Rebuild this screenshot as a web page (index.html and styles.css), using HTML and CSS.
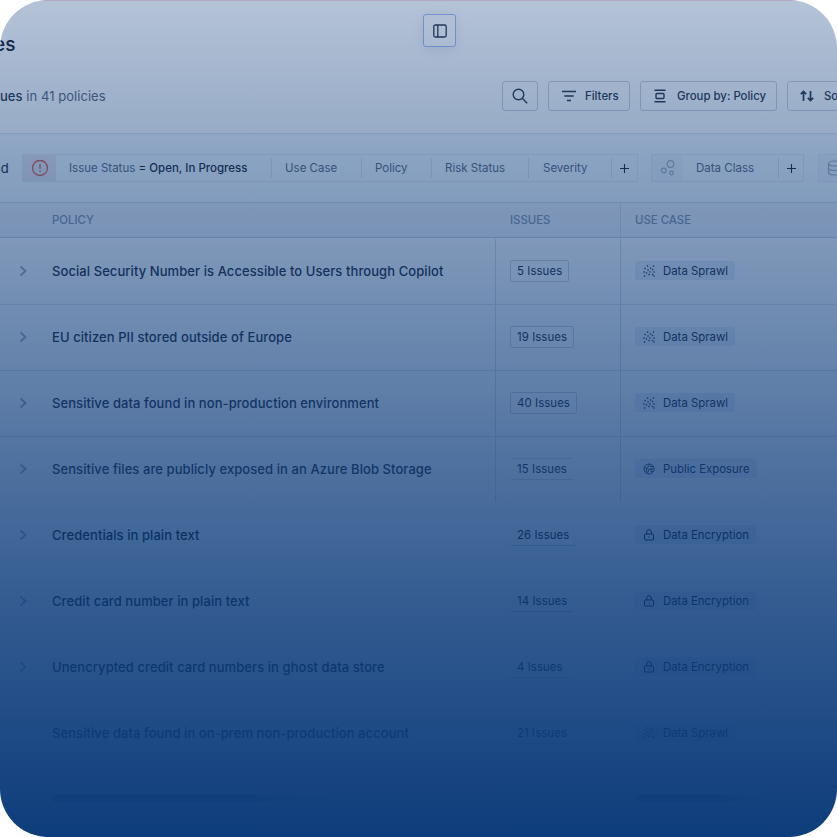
FILE: index.html
```
<!DOCTYPE html>
<html lang="en">
<head>
  <meta charset="UTF-8" />
  <meta name="viewport" content="width=device-width, initial-scale=1.0"/>
  <title>Policies</title>
  <link rel="stylesheet" href="styles.css">
</head>
<body>

<!-- Shared icons -->
<svg class="sprite" width="0" height="0">
  <symbol id="chevron" viewBox="0 0 10 12"><path d="M2.500 1.500 7.500 6l-5 4.500" fill="none" stroke="currentColor" stroke-width="1.800"/></symbol>
  <symbol id="sprawl" viewBox="0 0 12 12">
    <path d="M4.500 1h.1M10.500 1h.1M2 3.500h.1M7.500 3h.1M5 5h.1M9.500 4.500h.1M1 7h.1M7 7h.1M11 7h.1M3.500 8h.1M6 9.500h.1M9.500 9.500h.1M1.500 11h.1M11 11h.1" fill="none" stroke="currentColor" stroke-width="1.500" stroke-linecap="round"/>
  </symbol>
  <symbol id="exposure" viewBox="0 0 12 12">
    <g fill="none" stroke="currentColor" stroke-width=".9"><circle cx="6" cy="6" r="5"/><path d="M1.500 4.500 4 5.500 3 9M4 5.500 6.500 1.500M4.500 10l1.500-4h4M8 6v2.500l2 .5M7 3.500h3"/></g>
  </symbol>
  <symbol id="lock" viewBox="0 0 12 12">
    <g fill="none" stroke="currentColor"><rect x="1.500" y="5" width="9" height="6" rx="1"/><path d="M3.700 5V3a2.300 2.300 0 0 1 4.600 0v2M6 7.500v1.200"/></g>
  </symbol>
</svg>

<div class="panel">
  <button class="sidebar-toggle" type="button" aria-label="Toggle sidebar">
    <svg width="14" height="14" viewBox="0 0 14 14" fill="none" stroke="currentColor" stroke-width="1.300"><rect x=".8" y="1" width="12.400" height="12" rx="1.500"/><path d="M4.800 1v12"/></svg>
  </button>

  <header class="page-title">es</header>

  <div class="toolbar">
    <div class="summary"><b>ues</b> in 41 policies</div>
    <button class="tool-btn btn-search" type="button" aria-label="Search">
      <svg width="16" height="16" viewBox="0 0 16 16" fill="none" stroke="currentColor" stroke-width="1.400"><circle cx="6.500" cy="6.500" r="5.300"/><path d="m10.500 10.500 4.700 4.700"/></svg>
    </button>
    <button class="tool-btn btn-filters" type="button">
      <svg width="14" height="12" viewBox="0 0 14 12" fill="none" stroke="currentColor" stroke-width="1.500"><path d="M0 1.500h14M2.300 6h9.400M5 10.500h4"/></svg>
      Filters
    </button>
    <button class="tool-btn btn-group" type="button">
      <svg width="12" height="14" viewBox="0 0 12 14" fill="none" stroke="currentColor" stroke-width="1.400"><path d="M.5 1.200h11M.5 12.800h11"/><rect x="2" y="4.500" width="8" height="5" rx="1"/></svg>
      Group by: Policy
    </button>
    <button class="tool-btn btn-sort" type="button">
      <svg width="14" height="12" viewBox="0 0 14 12" fill="none" stroke="currentColor" stroke-width="1.700"><path d="M3.500 11V1.500M.8 4.200l2.700-2.700 2.700 2.700M10.500 1v9.500M7.800 7.800l2.700 2.700 2.700-2.700"/></svg>
      Sort
    </button>
  </div>

  <div class="filter-bar">
    <span class="joiner">nd</span>
    <div class="filter-group issue-group">
      <span class="filter-icon alert">
        <svg width="18" height="18" viewBox="0 0 18 18" fill="none" stroke="currentColor" stroke-width="1.300"><circle cx="9" cy="9" r="7.500"/><path d="M9 5v4.800M9 11.500V13"/></svg>
      </span>
      <span class="filter status">Issue Status <b>= Open, In Progress</b></span>
      <span class="filter use-case">Use Case</span>
      <span class="filter policy">Policy</span>
      <span class="filter risk">Risk Status</span>
      <span class="filter severity">Severity</span>
      <span class="add"><svg width="9" height="9" viewBox="0 0 9 9" fill="none" stroke="currentColor" stroke-width="1.100"><path d="M4.500 0v9M0 4.500h9"/></svg></span>
    </div>
    <div class="filter-group data-group">
      <span class="filter-icon">
        <svg width="16" height="16" viewBox="0 0 16 16" fill="none" stroke="currentColor" stroke-width="1.200"><circle cx="10.500" cy="4" r="3.300"/><circle cx="3.800" cy="10.500" r="2.300"/><circle cx="11.500" cy="13" r="1.800"/></svg>
      </span>
      <span class="filter data-class">Data Class</span>
      <span class="add"><svg width="9" height="9" viewBox="0 0 9 9" fill="none" stroke="currentColor" stroke-width="1.100"><path d="M4.500 0v9M0 4.500h9"/></svg></span>
    </div>
    <div class="filter-group store-group">
      <span class="filter-icon">
        <svg width="16" height="16" viewBox="0 0 16 16" fill="none" stroke="currentColor" stroke-width="1.200"><ellipse cx="8" cy="3.500" rx="6.500" ry="2.500"/><path d="M1.500 3.500v9c0 1.400 2.900 2.500 6.500 2.500s6.500-1.100 6.500-2.500v-9M1.500 8c0 1.400 2.900 2.500 6.500 2.500s6.500-1.100 6.500-2.500"/></svg>
      </span>
    </div>
  </div>

  <div class="table">
    <div class="row head">
      <div class="col-policy">POLICY</div>
      <div class="col-issues">ISSUES</div>
      <div class="col-use">USE CASE</div>
    </div>
    <div class="row first">
      <div class="col-policy"><svg class="chevron"><use href="#chevron"/></svg><span>Social Security Number is Accessible to Users through Copilot</span></div>
      <div class="col-issues"><span class="count">5 Issues</span></div>
      <div class="col-use"><span class="tag"><svg><use href="#sprawl"/></svg>Data Sprawl</span></div>
    </div>
    <div class="row">
      <div class="col-policy"><svg class="chevron"><use href="#chevron"/></svg><span>EU citizen PII stored outside of Europe</span></div>
      <div class="col-issues"><span class="count">19 Issues</span></div>
      <div class="col-use"><span class="tag"><svg><use href="#sprawl"/></svg>Data Sprawl</span></div>
    </div>
    <div class="row">
      <div class="col-policy"><svg class="chevron"><use href="#chevron"/></svg><span>Sensitive data found in non-production environment</span></div>
      <div class="col-issues"><span class="count">40 Issues</span></div>
      <div class="col-use"><span class="tag"><svg><use href="#sprawl"/></svg>Data Sprawl</span></div>
    </div>
    <div class="row">
      <div class="col-policy"><svg class="chevron"><use href="#chevron"/></svg><span>Sensitive files are publicly exposed in an Azure Blob Storage</span></div>
      <div class="col-issues"><span class="count soft">15 Issues</span></div>
      <div class="col-use"><span class="tag"><svg><use href="#exposure"/></svg>Public Exposure</span></div>
    </div>
    <div class="row faded">
      <div class="col-policy"><svg class="chevron"><use href="#chevron"/></svg><span>Credentials in plain text</span></div>
      <div class="col-issues"><span class="count">26 Issues</span></div>
      <div class="col-use"><span class="tag"><svg><use href="#lock"/></svg>Data Encryption</span></div>
    </div>
    <div class="row faded">
      <div class="col-policy"><svg class="chevron"><use href="#chevron"/></svg><span>Credit card number in plain text</span></div>
      <div class="col-issues"><span class="count">14 Issues</span></div>
      <div class="col-use"><span class="tag"><svg><use href="#lock"/></svg>Data Encryption</span></div>
    </div>
    <div class="row faded">
      <div class="col-policy"><svg class="chevron"><use href="#chevron"/></svg><span>Unencrypted credit card numbers in ghost data store</span></div>
      <div class="col-issues"><span class="count">4 Issues</span></div>
      <div class="col-use"><span class="tag"><svg><use href="#lock"/></svg>Data Encryption</span></div>
    </div>
    <div class="row faded no-chevron">
      <div class="col-policy"><svg class="chevron"><use href="#chevron"/></svg><span>Sensitive data found in on-prem non-production account</span></div>
      <div class="col-issues"><span class="count">21 Issues</span></div>
      <div class="col-use"><span class="tag"><svg><use href="#sprawl"/></svg>Data Sprawl</span></div>
    </div>
    <!-- Row that has almost disappeared into the fade -->
    <div class="row faded ghost">
      <div class="col-policy"><i class="smudge wide"></i></div>
      <div class="col-issues"></div>
      <div class="col-use"><i class="smudge"></i></div>
    </div>
  </div>
</div>

</body>
</html>
```
FILE: styles.css
```
* {
  box-sizing: border-box;
}

body {
  margin: 0;
  background: #fff;
  font-family: Inter, "Liberation Sans", sans-serif;
  font-size: 11.400px;
  color: #19202f;
}

.sprite {
  position: absolute;
}

.panel {
  position: relative;
  width: 837px;
  height: 837px;
  overflow: hidden;
  border-radius: 48px;
  background: #fff;
}

/* blue fade over the whole panel */
.panel::after {
  content: "";
  position: absolute;
  inset: 0;
  pointer-events: none;
  box-shadow: inset 0 1px 0 rgba(170, 110, 160, 0.35);
  background: linear-gradient(to bottom,
    rgba(14, 61, 124, 0.31) 0,
    rgba(14, 61, 124, 0.53) 240px,
    rgba(14, 61, 124, 0.745) 480px,
    rgba(14, 61, 124, 0.84) 600px,
    rgba(14, 61, 124, 0.925) 720px,
    rgba(14, 61, 124, 0.975) 800px,
    rgb(14, 61, 124) 837px);
}

.sidebar-toggle {
  position: absolute;
  left: 423px;
  top: 14px;
  width: 33px;
  height: 33px;
  display: flex;
  align-items: center;
  justify-content: center;
  padding: 0;
  color: #2b3344;
  background: #fff;
  border: 1px solid #a3b8fb;
  border-radius: 3px;
  box-shadow: 0 3px 12px rgba(30, 40, 90, 0.1);
}

.page-title {
  height: 76px;
  padding-top: 33px;
  margin-left: -6px;
  font-size: 19px;
  line-height: 23px;
  font-weight: 500;
}

/* Toolbar */
.toolbar {
  display: flex;
  align-items: center;
  height: 58px;
  padding-bottom: 17px;
  border-bottom: 1px solid #dfe3eb;
}

.summary {
  width: 502px;
  flex: none;
  font-size: 13px;
  letter-spacing: 0.05px;
  color: #5c6578;
}

.summary b {
  font-weight: 500;
  color: #2b3344;
}

.tool-btn {
  display: flex;
  flex: none;
  align-items: center;
  height: 30px;
  margin-right: 10px;
  padding: 0 0 0 13px;
  font: 500 11.400px Inter, "Liberation Sans", sans-serif;
  color: #2b3344;
  white-space: nowrap;
  background: transparent;
  border: 1px solid #cad0dc;
  border-radius: 3px;
}

.btn-search {
  width: 36px;
  padding-left: 9px;
}

.btn-filters {
  width: 82px;
  gap: 9px;
}

.btn-group {
  width: 137px;
  gap: 11px;
}

.btn-sort {
  width: 90px;
  gap: 10px;
  padding-left: 12px;
}

/* Filters */
.filter-bar {
  display: flex;
  align-items: center;
  height: 68px;
  background: #f3f8fc;
}

.joiner {
  width: 29px;
  flex: none;
  margin-left: -7px;
  font-size: 13px;
}

.filter-group {
  display: flex;
  flex: none;
  align-items: center;
  height: 28px;
  border: 1px solid #e0e6f0;
  color: #5a6378;
  font-size: 11.500px;
}

.issue-group {
  width: 616px;
  margin-right: 13px;
}

.data-group {
  width: 153px;
  margin-right: 14px;
}

.store-group {
  width: 60px;
}

.filter-icon {
  width: 31px;
  height: 26px;
  display: flex;
  align-items: center;
  justify-content: center;
  color: #a3abbb;
  background: #edf1f7;
}

.filter-icon.alert {
  width: 33px;
  color: #dc5a40;
  background: #e7e4ea;
}

.filter {
  height: 20px;
  line-height: 20px;
  padding-left: 13px;
  border-right: 1px solid #d9dfea;
  white-space: nowrap;
}

.filter b {
  font-weight: 500;
  color: #19202f;
}

.status {
  width: 216px;
}

.use-case {
  width: 90px;
}

.policy {
  width: 70px;
}

.risk {
  width: 97px;
}

.severity {
  width: 83px;
  padding-left: 14px;
}

.data-class {
  width: 96px;
}

.add {
  flex: 1;
  display: flex;
  align-items: center;
  justify-content: center;
  color: #19202f;
}

/* Table */
.row {
  display: grid;
  grid-template-columns: 496px 125px 216px;
  height: 66px;
  border-top: 1px solid #dce1ec;
}

.row > div {
  display: flex;
  align-items: center;
  padding-bottom: 2px;
}

.row .col-policy,
.row .col-issues {
  border-right: 1px solid #d3dae7;
}

.row .col-policy {
  padding-left: 18px;
  font-size: 13px;
  font-weight: 500;
  letter-spacing: 0.075px;
}

.row .col-issues {
  padding-left: 14px;
}

.row .col-use {
  padding-left: 14px;
}

.row.head {
  height: 36px;
  background: #eef0f5;
  border-top: 1px solid #d3dae5;
  border-bottom: 1px solid #c5cddb;
  font-size: 11.400px;
  font-weight: 500;
  color: #868fa2;
}

.row.head > div {
  padding-bottom: 0;
}

.row.head .col-policy {
  padding-left: 52px;
  border-right: 0;
  font-size: 11.400px;
  letter-spacing: 0;
}

.row.first {
  border-top-color: transparent;
}

.chevron {
  width: 10px;
  height: 12px;
  margin-right: 24px;
  color: #9da6b8;
}

.count {
  height: 22px;
  padding: 0 6px;
  line-height: 20px;
  letter-spacing: 0.08px;
  border: 1px solid #ccd2df;
  border-radius: 2px;
}

.count.soft {
  border-color: #d5dbe7 transparent;
}

.tag {
  display: flex;
  align-items: center;
  height: 19px;
  padding: 0 7px 0 8px;
  background: #e9eef7;
  border-radius: 3px;
}

.tag svg {
  width: 12px;
  height: 12px;
  margin-right: 8px;
}

.row.faded {
  border-top-color: transparent;
  color: #000;
}

.row.faded .col-policy,
.row.faded .col-issues {
  border-right-color: transparent;
}

.faded .count {
  border-color: transparent transparent #c5cddd;
}

.no-chevron .chevron {
  visibility: hidden;
}

.ghost .col-policy {
  padding-left: 52px;
}

.smudge {
  width: 126px;
  height: 7px;
  background: linear-gradient(to right, #8a93a6, #8a93a6 70%, transparent);
}

.smudge.wide {
  width: 280px;
}
```
